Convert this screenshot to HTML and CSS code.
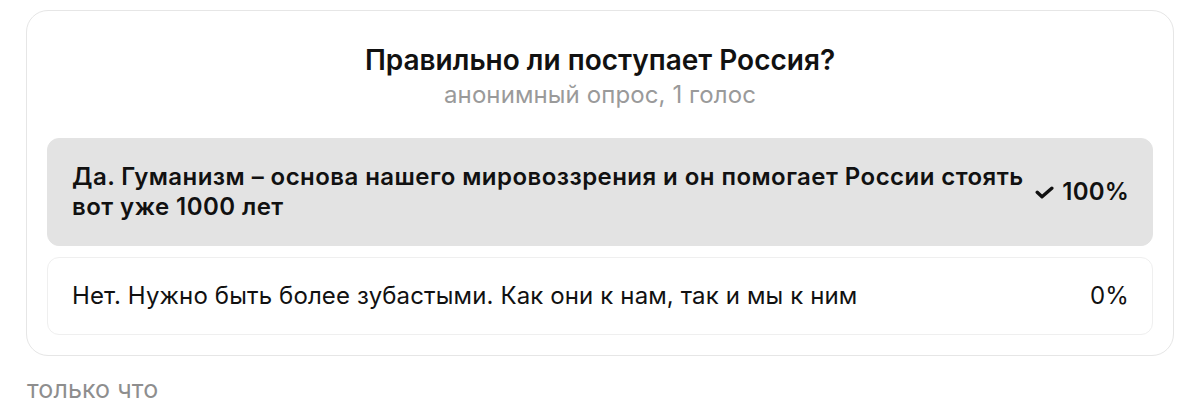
FILE: index.html
```html
<!DOCTYPE html>
<html lang="ru">
<head>
<meta charset="utf-8">
<link rel="stylesheet" href="styles.css">
</head>
<body>
<div class="card">
  <div class="title">Правильно ли поступает Россия?</div>
  <div class="subtitle">анонимный опрос, 1 голос</div>
  <div class="options">
    <div class="option chosen">
      <div class="text">Да. Гуманизм – основа нашего мировоззрения и он помогает России стоять вот уже 1000 лет</div>
      <div class="pct"><svg class="check" viewBox="0 0 19 13" width="19" height="13"><path d="M2.2 6.3 L7 10.8 L16.8 2.2" fill="none" stroke="#111" stroke-width="3.4" stroke-linecap="round" stroke-linejoin="round"/></svg>100%</div>
    </div>
    <div class="option">
      <div class="text">Нет. Нужно быть более зубастыми. Как они к нам, так и мы к ним</div>
      <div class="pct">0%</div>
    </div>
  </div>
</div>
<div class="time">только что</div>
</body>
</html>
```
FILE: styles.css
```css
html, body {
  margin: 0;
  background: #fff;
}
body {
  padding: 10px 26px 0 26px;
  font-family: Inter, "Noto Sans", sans-serif;
  color: #111;
}
.card {
  border: 1.5px solid #e6e6e6;
  border-radius: 22px;
  padding: 31px 20px 20px 20px;
}
.title {
  text-align: center;
  font-size: 28px;
  font-weight: 600;
  line-height: 36px;
}
.subtitle {
  text-align: center;
  font-size: 24px;
  color: #9a9a9a;
  line-height: 30px;
  margin-top: 2px;
  letter-spacing: 0.1px;
}
.options {
  margin-top: 28px;
  display: flex;
  flex-direction: column;
  gap: 11px;
}
.option {
  display: flex;
  align-items: center;
  justify-content: space-between;
  border: 1.5px solid #efefef;
  border-radius: 12px;
  padding: 22.5px 23px 23px 24px;
  font-size: 24px;
  line-height: 30px;
  letter-spacing: 0.13px;
}
.option.chosen {
  background: #e3e3e3;
  border-color: #e3e3e3;
  font-weight: 600;
  letter-spacing: 0.45px;
}
.option + .option {
  padding-top: 23.5px;
}
.text {
  flex: 1;
}
.pct {
  display: flex;
  align-items: center;
  gap: 8px;
  white-space: nowrap;
  margin-left: 6px;
  letter-spacing: 0.2px;
}
.check {
  display: block;
  margin-top: 2px;
}
.time {
  margin-top: 18px;
  margin-left: 1px;
  font-size: 25px;
  color: #8e8e8e;
  line-height: 30px;
  letter-spacing: 0.1px;
}
```
